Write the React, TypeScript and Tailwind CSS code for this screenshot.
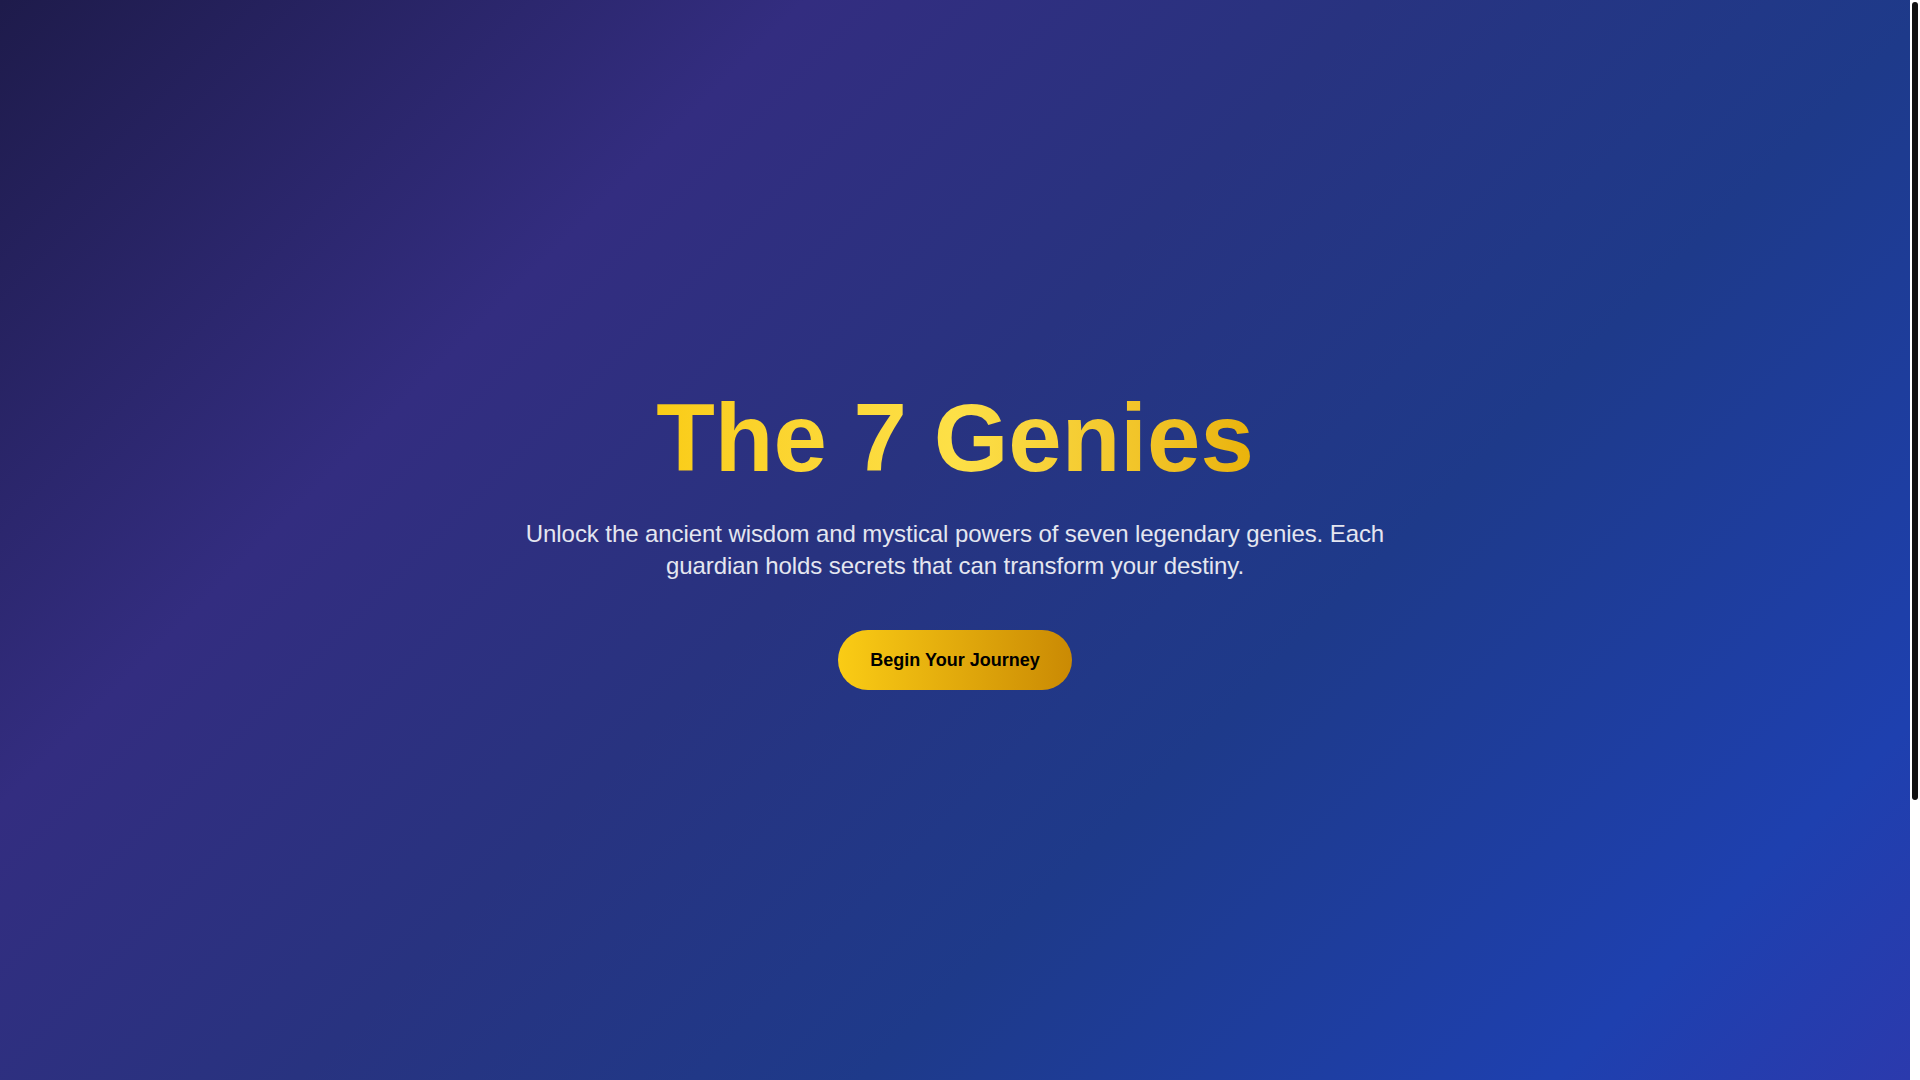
import React from 'react';

const App: React.FC = () => {
  return (
    <div className="flex h-screen bg-white font-['Liberation_Sans',Arial,sans-serif]">
      <main className="flex-1 overflow-y-auto [scrollbar-width:none]">
        {/* Hero */}
        <section className="h-screen flex items-center justify-center px-6 bg-[linear-gradient(135deg,#1e1b4b_0%,#332d80_27%,#283380_46%,#1e3a8a_65%,#1e40af_88%,#2b3aad_100%)]">
          <div className="flex flex-col items-center text-center">
            <h1 className="text-8xl font-bold mb-8 bg-gradient-to-r from-[#facc15] via-[#fde047] to-[#eab308] bg-clip-text text-transparent">
              The 7 Genies
            </h1>
            <p className="text-2xl tracking-[-0.08px] text-[#e4e6f0] max-w-4xl mb-12">
              Unlock the ancient wisdom and mystical powers of seven legendary genies. Each guardian holds secrets that can transform your destiny.
            </p>
            <button className="px-8 py-4 rounded-full bg-gradient-to-r from-[#facc15] to-[#ca8a04] text-black text-lg font-bold hover:from-[#fde047] hover:to-[#eab308]">
              Begin Your Journey
            </button>
          </div>
        </section>

        {/* Below the fold */}
        <section className="h-[378px] bg-[#2b3aab]" />
      </main>

      {/* Scrollbar */}
      <div className="w-[10px] shrink-0 bg-white px-[2px] pt-[2px]">
        <div className="h-[798px] rounded-full bg-[#111111]" />
      </div>
    </div>
  );
};

export default App;
